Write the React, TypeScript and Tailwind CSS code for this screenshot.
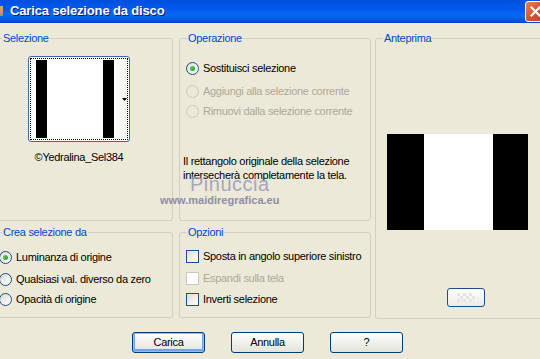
import React from 'react';

function Group({ label, className, children }: { label: string; className: string; children?: React.ReactNode }) {
  return (
    <div className={`relative border border-[#D0D0BF] rounded-[3px] ${className}`}>
      <span className="absolute top-[-7px] left-[7px] bg-[#ECE9D8] px-[1px] text-[#0046D5] leading-[13px] whitespace-nowrap">
        {label}
      </span>
      {children}
    </div>
  );
}

function Radio({ checked, disabled }: { checked?: boolean; disabled?: boolean }) {
  return (
    <span
      className={
        disabled
          ? 'w-[13px] h-[13px] rounded-full border border-[#CAC8BB] bg-[#ECE9D8] flex items-center justify-center shrink-0'
          : 'w-[13px] h-[13px] rounded-full border border-[#1C5180] bg-gradient-to-br from-[#DCDCD7] to-white flex items-center justify-center shrink-0'
      }
    >
      {checked && <span className="w-[5px] h-[5px] rounded-full bg-gradient-to-br from-[#55D551] to-[#21A121]" />}
    </span>
  );
}

function Check({ disabled }: { disabled?: boolean }) {
  return (
    <span
      className={
        disabled
          ? 'w-[13px] h-[13px] border border-[#CAC8BB] bg-white shrink-0'
          : 'w-[13px] h-[13px] border border-[#1C5180] bg-gradient-to-br from-[#DCDCD7] to-white shrink-0'
      }
    />
  );
}

function Row({ children, className }: { children: React.ReactNode; className: string }) {
  return <div className={`flex items-center gap-[4px] h-[13px] whitespace-nowrap ${className}`}>{children}</div>;
}

function Btn({ label, def }: { label: string; def?: boolean }) {
  return (
    <div
      className={
        def
          ? 'w-[73px] h-[21px] shrink-0 border border-[#003C74] rounded-[3px] bg-gradient-to-b from-white to-[#E3E3DB] flex items-center justify-center shadow-[inset_0_0_0_1px_#9DB9EB,inset_0_-1px_0_2px_#7B9FE6]'
          : 'w-[73px] h-[21px] shrink-0 border border-[#003C74] rounded-[3px] bg-gradient-to-b from-white to-[#E3E3DB] flex items-center justify-center'
      }
    >
      {label}
    </div>
  );
}

export default function App() {
  return (
    <div className="w-[540px] h-[359px] bg-[#ECE9D8] relative overflow-hidden font-['Liberation_Sans',Arial,sans-serif] text-[11px] tracking-[-0.3px] text-black">
      {/* Title bar */}
      <div className="h-[23px] flex items-start bg-[linear-gradient(to_bottom,#0050E0_0px,#0058EA_8px,#0A68F6_15px,#0056E8_20px,#0042CC_23px)]">
        <div className="w-[3px] h-[10px] mt-[6px] bg-gradient-to-b from-[#F2A64A] to-[#9A8F80] rounded-r-[1px] shrink-0" />
        <div className="ml-[7px] mt-[3px] text-white font-bold text-[13px] tracking-[-0.15px] leading-[16px] whitespace-nowrap [text-shadow:1px_1px_#0A1883]">
          Carica selezione da disco
        </div>
        <div className="ml-auto mr-[-6px] mt-[1px] w-[21px] h-[21px] shrink-0 rounded-[3px] border border-white bg-gradient-to-br from-[#E9805F] via-[#D9532A] to-[#C2441F] flex items-center justify-center">
          <svg width="11" height="11" viewBox="0 0 11 11">
            <path d="M1.5 1.5L9.5 9.5M9.5 1.5L1.5 9.5" stroke="white" strokeWidth="2.2" strokeLinecap="square" />
          </svg>
        </div>
      </div>

      {/* Groups */}
      <div className="flex pt-[15px] ml-[-6px]">
        <div className="flex flex-col w-[179px] shrink-0 gap-[11px]">
          <Group label="Selezione" className="h-[183px]">
            <div className="flex flex-col items-center w-[102px] ml-[33px] mt-[17px]">
              <div className="w-[102px] h-[86px] border border-[#3D6AA8] rounded-[3px] p-[1px] bg-white">
                <div className="w-full h-full border border-dotted border-black flex pl-[5px] py-[1px]">
                  <div className="w-[11px] bg-black" />
                  <div className="w-[56px] bg-white" />
                  <div className="w-[11px] bg-black" />
                  <div className="flex-1 flex items-center justify-end bg-gradient-to-r from-white to-[#F1F1EE]">
                    <svg width="5" height="3" viewBox="0 0 5 3">
                      <path d="M0 0H5L2.5 3Z" fill="black" />
                    </svg>
                  </div>
                </div>
              </div>
              <div className="mt-[9px] leading-[13px] whitespace-nowrap">©Yedralina_Sel384</div>
            </div>
          </Group>
          <Group label="Crea selezione da" className="h-[86px]">
            <div className="flex flex-col pl-[4px] pt-[18px]">
              <Row className="">
                <Radio checked />
                <span>Luminanza di origine</span>
              </Row>
              <Row className="mt-[9px]">
                <Radio />
                <span>Qualsiasi val. diverso da zero</span>
              </Row>
              <Row className="mt-[7px]">
                <Radio />
                <span>Opacità di origine</span>
              </Row>
            </div>
          </Group>
        </div>

        <div className="flex flex-col w-[192px] shrink-0 ml-[6px] gap-[11px]">
          <Group label="Operazione" className="h-[183px]">
            <div className="flex flex-col pl-[6px] pt-[23px]">
              <Row className="">
                <Radio checked />
                <span>Sostituisci selezione</span>
              </Row>
              <Row className="mt-[10px] text-[#ACA899]">
                <Radio disabled />
                <span>Aggiungi alla selezione corrente</span>
              </Row>
              <Row className="mt-[7px] text-[#ACA899]">
                <Radio disabled />
                <span>Rimuovi dalla selezione corrente</span>
              </Row>
              <div className="mt-[37px] ml-[-3px] leading-[13.5px] whitespace-nowrap">
                Il rettangolo originale della selezione
                <br />
                intersecherà completamente la tela.
              </div>
            </div>
          </Group>
          <Group label="Opzioni" className="h-[86px]">
            <div className="flex flex-col pl-[6px] pt-[17px]">
              <Row className="">
                <Check />
                <span>Sposta in angolo superiore sinistro</span>
              </Row>
              <Row className="mt-[9px] text-[#ACA899]">
                <Check disabled />
                <span>Espandi sulla tela</span>
              </Row>
              <Row className="mt-[8px]">
                <Check />
                <span>Inverti selezione</span>
              </Row>
            </div>
          </Group>
        </div>

        <div className="w-[172px] shrink-0 ml-[4px]">
          <Group label="Anteprima" className="h-[281px]">
            <div className="flex flex-col pl-[11px] pt-[95px]">
              <div className="flex w-[141px] h-[96px]">
                <div className="w-[37px] bg-black" />
                <div className="w-[69px] bg-white" />
                <div className="flex-1 bg-black" />
              </div>
              <div className="ml-[60px] mt-[58px] w-[38px] h-[19px] border border-[#1E4E8A] rounded-[3px] bg-gradient-to-b from-white to-[#ECEBE4] flex items-center justify-center">
                <svg width="18" height="9" viewBox="0 0 18 9">
                  <rect x="0" y="0" width="3" height="3" fill="#E4E4E0" />
                  <rect x="6" y="0" width="3" height="3" fill="#E4E4E0" />
                  <rect x="12" y="0" width="3" height="3" fill="#E4E4E0" />
                  <rect x="3" y="3" width="3" height="3" fill="#E4E4E0" />
                  <rect x="9" y="3" width="3" height="3" fill="#E4E4E0" />
                  <rect x="15" y="3" width="3" height="3" fill="#E4E4E0" />
                  <rect x="0" y="6" width="3" height="3" fill="#E4E4E0" />
                  <rect x="6" y="6" width="3" height="3" fill="#E4E4E0" />
                  <rect x="12" y="6" width="3" height="3" fill="#E4E4E0" />
                </svg>
              </div>
            </div>
          </Group>
        </div>
      </div>

      {/* Buttons */}
      <div className="flex pl-[132px] gap-[26px] mt-[13px] leading-[13px]">
        <Btn label="Carica" def />
        <Btn label="Annulla" />
        <Btn label="?" />
      </div>

      {/* Watermark */}
      <div className="absolute left-[190px] top-[174px] text-[20px] leading-[20px] tracking-[0.5px] text-[#A19FBA] opacity-90 pointer-events-none">
        Pinuccia
      </div>
      <div className="absolute left-[160px] top-[194px] text-[11px] leading-[13px] font-bold tracking-[0px] text-[#8F8DA8] pointer-events-none">
        www.maidiregrafica.eu
      </div>
    </div>
  );
}
